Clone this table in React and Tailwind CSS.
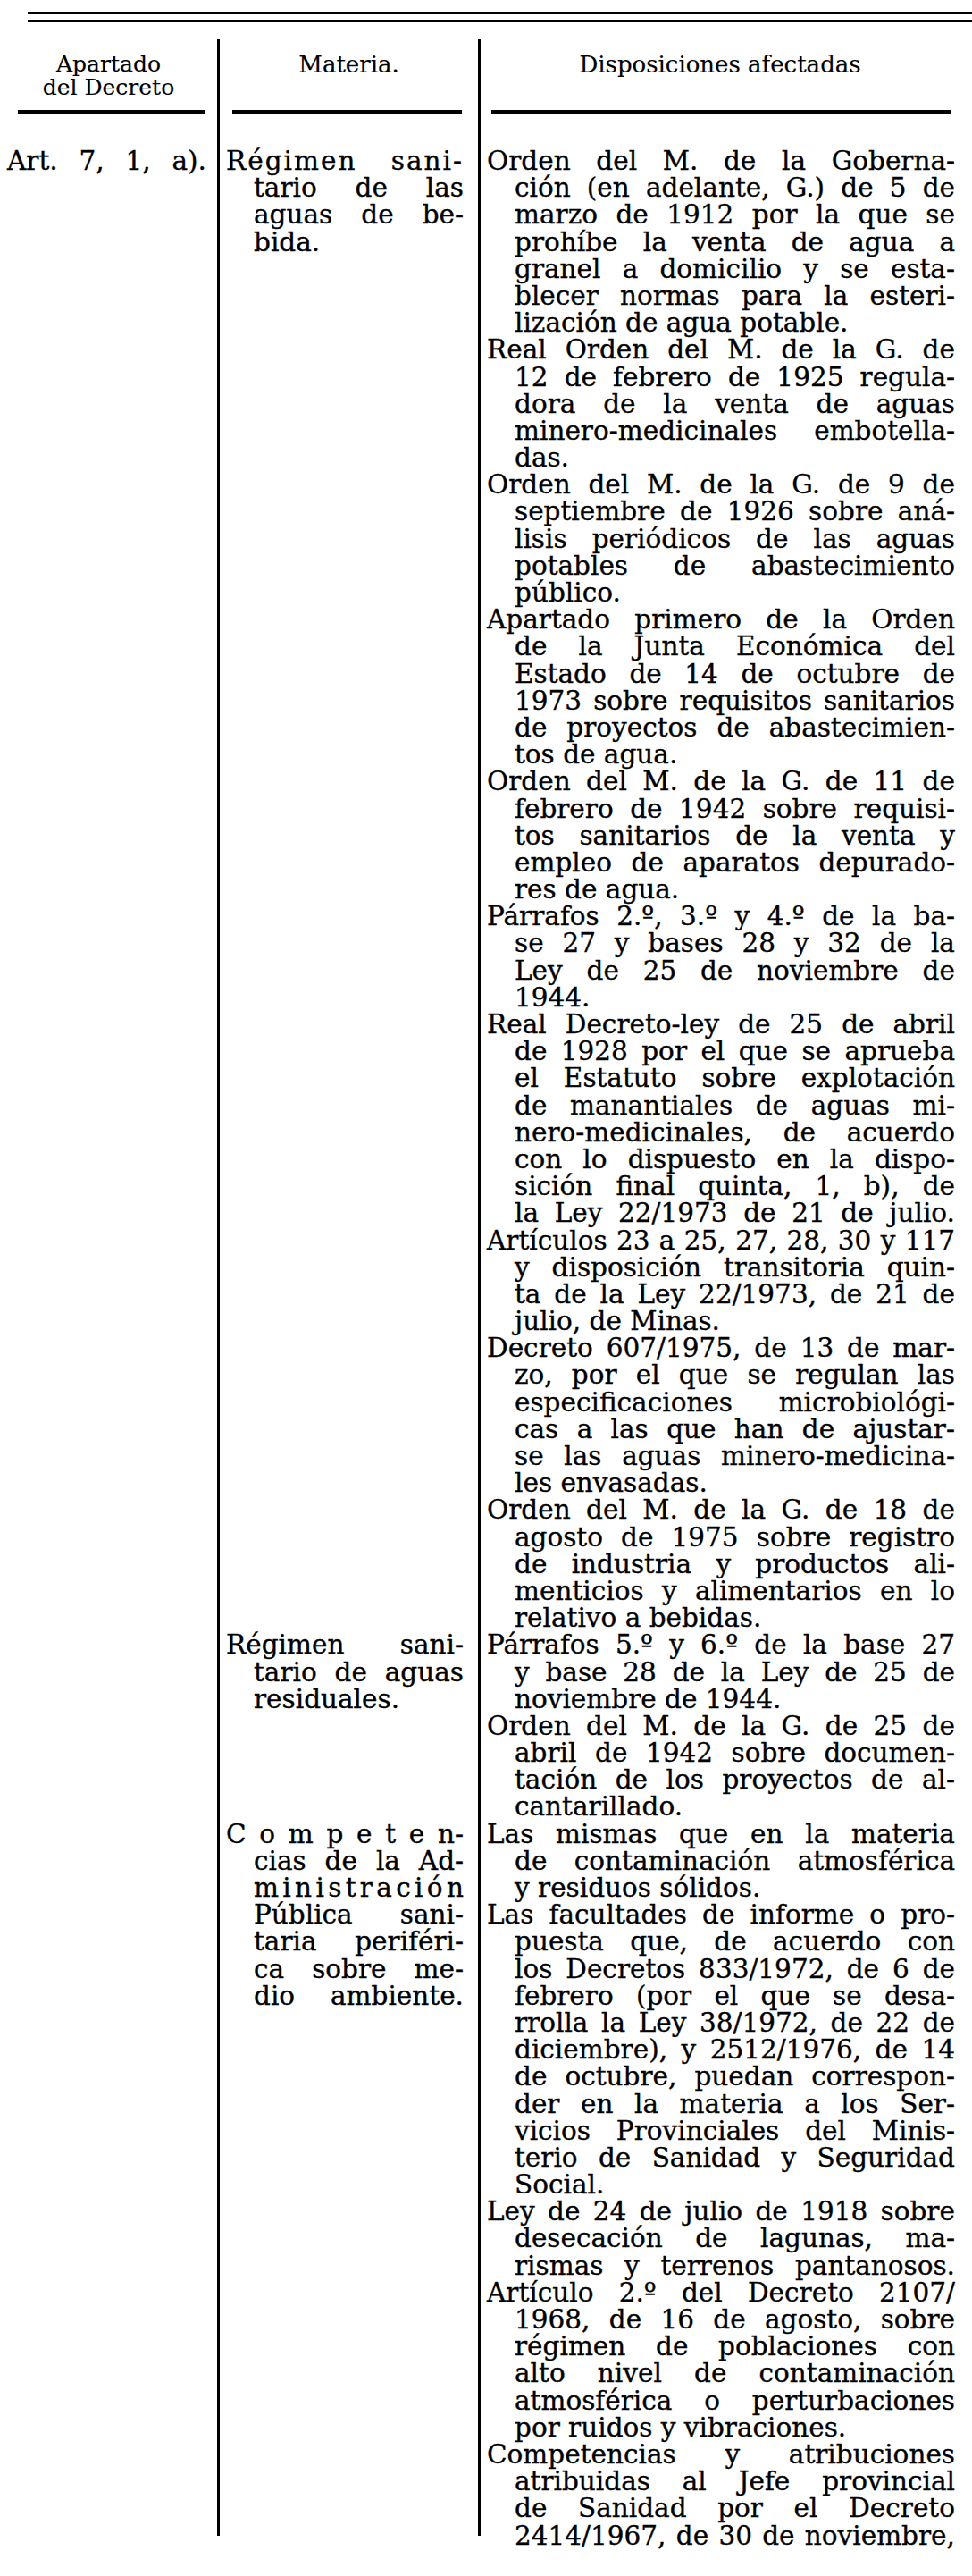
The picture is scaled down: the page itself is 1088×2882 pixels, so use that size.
import React from "react";

const col3 = [
  { lines: ["Orden del M. de la Goberna-", "ción (en adelante, G.) de 5 de", "marzo de 1912 por la que se", "prohíbe la venta de agua a", "granel a domicilio y se esta-", "blecer normas para la esteri-", "lización de agua potable."] },
  { lines: ["Real Orden del M. de la G. de", "12 de febrero de 1925 regula-", "dora de la venta de aguas", "minero-medicinales embotella-", "das."] },
  { lines: ["Orden del M. de la G. de 9 de", "septiembre de 1926 sobre aná-", "lisis periódicos de las aguas", "potables de abastecimiento", "público."] },
  { lines: ["Apartado primero de la Orden", "de la Junta Económica del", "Estado de 14 de octubre de", "1973 sobre requisitos sanitarios", "de proyectos de abastecimien-", "tos de agua."] },
  { lines: ["Orden del M. de la G. de 11 de", "febrero de 1942 sobre requisi-", "tos sanitarios de la venta y", "empleo de aparatos depurado-", "res de agua."] },
  { lines: ["Párrafos 2.º, 3.º y 4.º de la ba-", "se 27 y bases 28 y 32 de la", "Ley de 25 de noviembre de", "1944."] },
  { lines: ["Real Decreto-ley de 25 de abril", "de 1928 por el que se aprueba", "el Estatuto sobre explotación", "de manantiales de aguas mi-", "nero-medicinales, de acuerdo", "con lo dispuesto en la dispo-", "sición final quinta, 1, b), de", "la Ley 22/1973 de 21 de julio."], full: true },
  { lines: ["Artículos 23 a 25, 27, 28, 30 y 117", "y disposición transitoria quin-", "ta de la Ley 22/1973, de 21 de", "julio, de Minas."] },
  { lines: ["Decreto 607/1975, de 13 de mar-", "zo, por el que se regulan las", "especificaciones microbiológi-", "cas a las que han de ajustar-", "se las aguas minero-medicina-", "les envasadas."] },
  { lines: ["Orden del M. de la G. de 18 de", "agosto de 1975 sobre registro", "de industria y productos ali-", "menticios y alimentarios en lo", "relativo a bebidas."] },
  { lines: ["Párrafos 5.º y 6.º de la base 27", "y base 28 de la Ley de 25 de", "noviembre de 1944."] },
  { lines: ["Orden del M. de la G. de 25 de", "abril de 1942 sobre documen-", "tación de los proyectos de al-", "cantarillado."] },
  { lines: ["Las mismas que en la materia", "de contaminación atmosférica", "y residuos sólidos."] },
  { lines: ["Las facultades de informe o pro-", "puesta que, de acuerdo con", "los Decretos 833/1972, de 6 de", "febrero (por el que se desa-", "rrolla la Ley 38/1972, de 22 de", "diciembre), y 2512/1976, de 14", "de octubre, puedan correspon-", "der en la materia a los Ser-", "vicios Provinciales del Minis-", "terio de Sanidad y Seguridad", "Social."] },
  { lines: ["Ley de 24 de julio de 1918 sobre", "desecación de lagunas, ma-", "rismas y terrenos pantanosos."], full: true },
  { lines: ["Artículo 2.º del Decreto 2107/", "1968, de 16 de agosto, sobre", "régimen de poblaciones con", "alto nivel de contaminación", "atmosférica o perturbaciones", "por ruidos y vibraciones."] },
  { lines: ["Competencias y atribuciones", "atribuidas al Jefe provincial", "de Sanidad por el Decreto", "2414/1967, de 30 de noviembre,"], full: true },
];

const col2Blocks = [
  { start: 0, lines: [{ t: "Régimen sani-", j: true, spaced: true }, { t: "tario de las", j: true }, { t: "aguas de be-", j: true }, { t: "bida." }] },
  { start: 55, lines: [{ t: "Régimen sani-", j: true }, { t: "tario de aguas", j: true }, { t: "residuales." }] },
  {
    start: 62,
    lines: [
      { t: "C o m p e t e n-", j: true },
      { t: "cias de la Ad-", j: true },
      { t: "m i n i s t r a c i ó n", j: true },
      { t: "Pública sani-", j: true },
      { t: "taria periféri-", j: true },
      { t: "ca sobre me-", j: true },
      { t: "dio ambiente.", j: true },
    ],
  },
];

function Line({ text, justify, indentClass }) {
  if (justify) {
    return (
      <div className={`flex justify-between h-[30.2px] leading-[30.2px] whitespace-nowrap ${indentClass}`}>
        {text.split(" ").map((w, i) => (
          <span key={i}>{w}</span>
        ))}
      </div>
    );
  }
  return <div className={`h-[30.2px] leading-[30.2px] whitespace-nowrap ${indentClass}`}>{text}</div>;
}

function Col2Lines() {
  const out = [];
  let cur = 0;
  col2Blocks.forEach((b, bi) => {
    while (cur < b.start) {
      out.push(<div key={`e${cur}`} className="h-[30.2px]" />);
      cur++;
    }
    b.lines.forEach((l, i) => {
      out.push(
        <Line
          key={`b${bi}-${i}`}
          text={l.t}
          justify={!!l.j}
          indentClass={i === 0 ? (l.spaced ? "tracking-[2px]" : "") : "pl-[31px]"}
        />
      );
      cur++;
    });
  });
  return <div className="flex flex-col">{out}</div>;
}

function Col3Lines() {
  const out = [];
  col3.forEach((e, ei) => {
    e.lines.forEach((l, i) => {
      const last = i === e.lines.length - 1;
      out.push(<Line key={`${ei}-${i}`} text={l} justify={!last || !!e.full} indentClass={i === 0 ? "" : "pl-[31px]"} />);
    });
  });
  return <div className="flex flex-col">{out}</div>;
}

export default function App() {
  return (
    <div
      className="w-[1088px] h-[2882px] bg-white text-black overflow-hidden [-webkit-text-stroke:0.35px_#000]"
      style={{ fontFamily: '"DejaVu Serif", "Liberation Serif", serif' }}
    >
      {/* top double rule */}
      <div className="pt-[13px] pl-[31px]">
        <div className="h-[3px] bg-black" />
        <div className="h-[3px] bg-black mt-[6px]" />
      </div>

      <div className="mt-[19px] grid grid-cols-[243px_3px_289px_3px_550px] items-start">
        {/* column 1 */}
        <div className="flex flex-col">
          <div className="h-[79px] pt-[15px] text-center text-[25px] leading-[26px] [-webkit-text-stroke:0.15px_#000]">
            <div>Apartado</div>
            <div>del Decreto</div>
          </div>
          <div className="h-[4px] bg-black ml-[20px] w-[209px]" />
          <div className="h-[38px]" />
          <div className="pl-[8px] pr-[12px] text-[29.5px]">
            <Line text="Art. 7, 1, a)." justify={true} indentClass="" />
          </div>
        </div>

        <div className="w-[3px] h-[2793px] bg-black" />

        {/* column 2 */}
        <div className="flex flex-col">
          <div className="h-[79px] pt-[15px] text-center text-[26px] leading-[26px] [-webkit-text-stroke:0.15px_#000]">
            <div>Materia.</div>
          </div>
          <div className="h-[4px] bg-black ml-[14px] w-[257px]" />
          <div className="h-[38px]" />
          <div className="pl-[7px] w-[273px] text-[29.5px]">
            <Col2Lines />
          </div>
        </div>

        <div className="w-[3px] h-[2793px] bg-black" />

        {/* column 3 */}
        <div className="flex flex-col">
          <div className="h-[79px] pt-[15px] text-center text-[26px] leading-[26px] pr-[14px] [-webkit-text-stroke:0.15px_#000]">
            <div>Disposiciones afectadas</div>
          </div>
          <div className="h-[4px] bg-black ml-[12px] w-[514px]" />
          <div className="h-[38px]" />
          <div className="pl-[7px] w-[531px] text-[29.5px]">
            <Col3Lines />
          </div>
        </div>
      </div>
    </div>
  );
}
